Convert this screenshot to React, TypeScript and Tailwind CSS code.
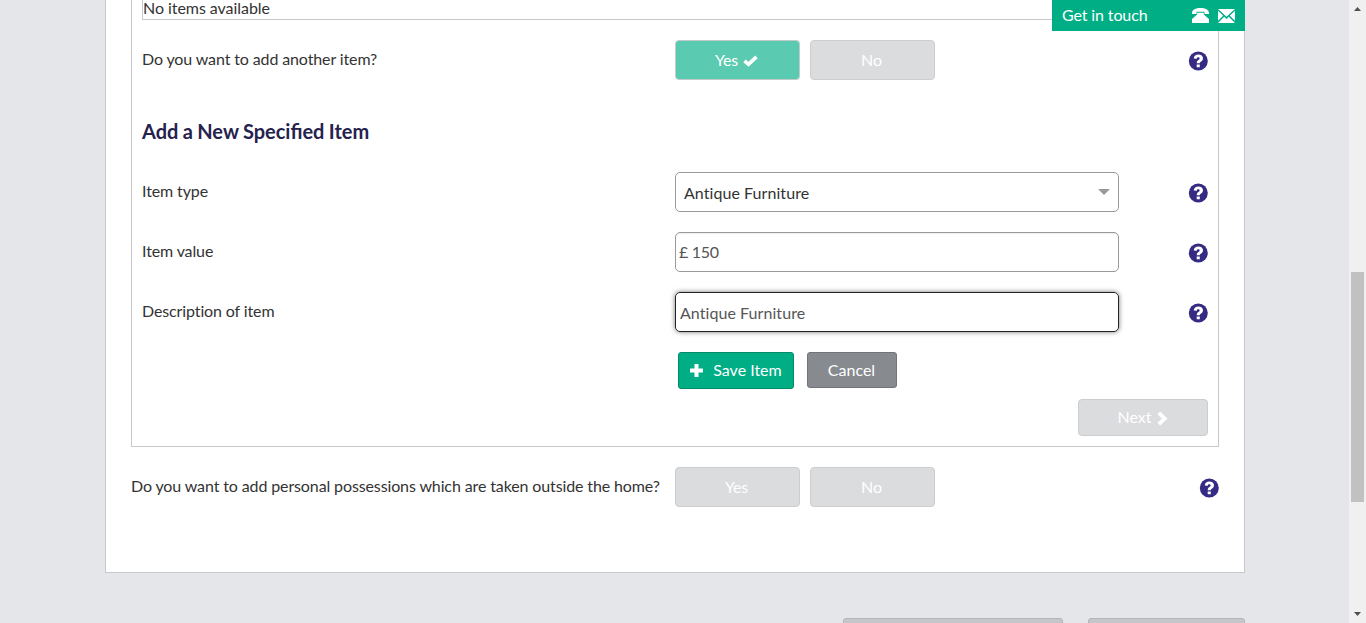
import React from "react";

function Help({ className = "" }: { className?: string }) {
  return (
    <svg className={`block h-5 w-5 shrink-0 ${className}`} viewBox="0 0 20 20" aria-label="Help">
      <circle cx="10.3" cy="10" r="9.5" fill="#352b83" />
      <path
        d="M5.7 7.6C5.9 4.9 7.8 3.5 10.4 3.5c2.7 0 4.6 1.5 4.6 3.8 0 1.6-.8 2.5-1.9 3.2-.9.6-1.3.9-1.3 1.8H8.7c0-1.7.6-2.6 1.7-3.3.8-.5 1.2-.8 1.2-1.5 0-.8-.5-1.2-1.3-1.2-.9 0-1.4.5-1.5 1.4zM8.7 13.4h3.1v2.9H8.7z"
        fill="#fff"
      />
    </svg>
  );
}

function Row({ label, children, inset = false }: { label: string; children: React.ReactNode; inset?: boolean }) {
  return (
    <div className="flex h-10">
      <div className={`shrink-0 pt-[7px] ${inset ? "w-[533px]" : "w-[544px]"}`}>{label}</div>
      <div className="flex flex-1 gap-[10px]">{children}</div>
      <Help className="mt-[11px]" />
    </div>
  );
}

const faded =
  "flex items-center justify-center rounded-[4px] border border-[#cccdce] bg-[#dbdcde] text-white";

export default function App() {
  return (
    <div className="flex h-[623px] w-[1366px] overflow-hidden bg-[#e5e6ea] font-['Lato',sans-serif] text-[16px] leading-6 tracking-[-0.12px] text-[#333]">
      <main className="relative w-[1349px] pl-[105px]">
        <div className="h-[573px] w-[1140px] border-x border-b border-[#c8c9cc] bg-white px-[25px]">
          <section className="h-[447px] w-[1088px] border-x border-b border-[#c8c9cc] px-[10px]">
            <div className="h-5 border-x border-b border-[#c8c9cc] leading-4 tracking-[-0.05px]">No items available</div>
            <div className="pt-5">
              <Row label="Do you want to add another item?" inset>
                <button className="flex w-[125px] items-center justify-center gap-[5px] rounded-[4px] border border-[#c2cbc9] bg-[#5acbb0] pr-[2px] text-white">
                  Yes
                  <svg className="mt-px h-[12px] w-[15px]" viewBox="0 0 15 12">
                    <path d="M1.5 5.8 5.5 9.3 13.4 1.9" fill="none" stroke="#fff" strokeWidth="3.7" />
                  </svg>
                </button>
                <button className={`w-[125px] pr-[2px] ${faded}`}>No</button>
              </Row>
            </div>
            <h2 className="mt-[39px] h-[53px] text-[20px] font-bold tracking-normal [word-spacing:-0.5px] text-[#25224d]">
              Add a New Specified Item
            </h2>
            <div className="flex flex-col gap-5">
              <Row label="Item type" inset>
                <div className="flex w-[444px] items-center justify-between rounded-[5px] border border-[#999] pt-[2px] pr-[8px] pl-2 tracking-[0.06px]">
                  Antique Furniture
                  <svg className="mb-[3px] h-[6px] w-[12px]" viewBox="0 0 12 6">
                    <path d="M0 0h12L6 6z" fill="#999" />
                  </svg>
                </div>
              </Row>
              <Row label="Item value" inset>
                <div className="flex w-[444px] items-center rounded-[5px] border border-[#999] pl-[3px] tracking-[-0.3px] text-[#555] shadow-[inset_0_1px_1px_rgba(0,0,0,0.075)]">
                  £ 150
                </div>
              </Row>
              <Row label="Description of item" inset>
                <div className="flex w-[444px] items-center rounded-[5px] border border-[#222] px-1 pt-[2px] tracking-[0.06px] text-[#555] shadow-[0_0_5px_rgba(0,0,0,0.55)]">
                  Antique Furniture
                </div>
              </Row>
            </div>
            <div className="mt-5 flex pl-[536px] tracking-normal">
              <button className="flex h-[37px] w-[116px] items-center justify-center gap-[10px] rounded-[3px] border border-[#008a67] bg-[#00ae86] pb-px text-white">
                <svg className="h-[13px] w-[13px]" viewBox="0 0 13 13">
                  <path d="M4.5 0h4v4.5H13v4H8.5V13h-4V8.5H0v-4h4.5z" fill="#fff" />
                </svg>
                Save Item
              </button>
              <button className="ml-[13px] flex h-9 w-[90px] items-center justify-center rounded-[3px] border border-[#727479] bg-[#878a8f] pr-px text-white">
                Cancel
              </button>
            </div>
            <div className="mt-[10px] flex justify-end">
              <button className={`h-[37px] w-[130px] gap-[5px] pr-px pb-px tracking-normal ${faded}`}>
                Next
                <svg className="mt-[3px] h-[15px] w-[11px]" viewBox="0 0 11 15">
                  <path d="M1.8 1.8 7.8 7.5 1.8 13.2" fill="none" stroke="#fff" strokeWidth="3.8" />
                </svg>
              </button>
            </div>
          </section>
          <div className="w-[1088px] pt-5">
            <Row label="Do you want to add personal possessions which are taken outside the home?">
              <button className={`w-[125px] pr-[2px] ${faded}`}>Yes</button>
              <button className={`w-[125px] pr-[2px] ${faded}`}>No</button>
            </Row>
          </div>
        </div>
        <div className="flex gap-[25px] pt-[45px] pl-[738px]">
          <div className="h-10 w-[220px] rounded-[3px] border border-[#b3b4b8] bg-[#c5c6ca]" />
          <div className="h-10 w-[157px] rounded-[3px] border border-[#b3b4b8] bg-[#c5c6ca]" />
        </div>
        <div className="absolute top-0 left-[1052px] flex h-[31px] w-[193px] items-center bg-[#00ae86] pl-[10px] text-white">
          <span className="w-[130px] pb-[2px]">Get in touch</span>
          <svg className="h-[15px] w-[17px]" viewBox="0 0 17 15">
            <path d="M0 5.2C0 1.5 3.8 0 8.5 0S17 1.5 17 5.2V6h-4.5V3.8h-8V6H0zM5.2 4.8h6.6v1.7L17 11v4H0v-4l5.2-4.5z" fill="#fff" />
          </svg>
          <svg className="ml-[9px] h-[14px] w-[17px]" viewBox="0 0 17 14">
            <path d="M0 0h17L8.5 7.8zM0 1.7 5.2 6.8 0 11.8zM17 1.7v10.1l-5.2-5zM0 14l6.2-6.2 2.3 2.1 2.3-2.1L17 14z" fill="#fff" />
          </svg>
        </div>
      </main>
      <aside className="flex w-[17px] flex-col items-center bg-[#f0f0f0]">
        <svg className="mt-[7px] h-1 w-[7px]" viewBox="0 0 7 4"><path d="M0 4 3.5 0 7 4z" fill="#505050" /></svg>
        <div className="mt-[261px] h-[230px] w-[13px] bg-[#c1c1c1]" />
        <svg className="mt-[110px] h-1 w-[7px]" viewBox="0 0 7 4"><path d="M0 0h7L3.5 4z" fill="#505050" /></svg>
      </aside>
    </div>
  );
}
